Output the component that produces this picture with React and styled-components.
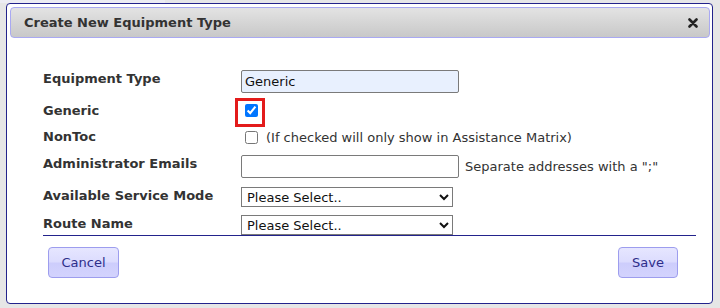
import React from 'react';
import styled, { createGlobalStyle } from 'styled-components';

const GlobalStyle = createGlobalStyle`
  html, body {
    margin: 0;
    padding: 0;
  }
  body {
    background: linear-gradient(to right, #ececf3 165px, #e6e6e9 165px) top left / 100% 3px no-repeat, #e6e6e6;
    font-family: "DejaVu Sans", Verdana, sans-serif;
    font-size: 13px;
    color: #222;
  }
`;

const Page = styled.div`
  padding: 3px 0 0 6px;
`;

const Dialog = styled.div`
  width: 700px;
  height: 296px;
  border: 1px solid #23238c;
  border-radius: 4px;
  background: #fff;
  padding: 3px 2px 0 3px;
  box-sizing: content-box;
  display: flex;
  flex-direction: column;
`;

const Header = styled.div`
  height: 29px;
  border: 1px solid #a9a9f2;
  border-radius: 4px;
  background: linear-gradient(to bottom, #e3e3e3, #c8c8c8);
  display: flex;
  align-items: center;
  justify-content: space-between;
  padding: 0 11px 0 13px;
`;

const Title = styled.span`
  font-weight: bold;
  font-size: 13px;
  color: #333;
`;

const CloseButton = styled.span`
  display: flex;
  align-items: center;
  cursor: pointer;
`;

const Content = styled.div`
  padding: 32px 14px 0 33px;
`;

const Form = styled.div`
  border-bottom: 1px solid #23238c;
`;

const Row = styled.div`
  display: flex;
  align-items: flex-start;
  margin-top: ${p => p.$gap || 0}px;
  height: ${p => p.$h}px;
`;

const Label = styled.div`
  width: 198px;
  flex: none;
  font-weight: bold;
  line-height: 16px;
  color: #333;
  padding-top: ${p => (p.$pt || 0) + 1}px;
`;

const TextInput = styled.input`
  width: 218px;
  height: 23px;
  box-sizing: border-box;
  border: 1px solid #7a7a7a;
  border-radius: 2px;
  background: ${p => (p.$filled ? '#e8f0fe' : '#fff')};
  font-family: "DejaVu Sans", Verdana, sans-serif;
  font-size: 13px;
  padding: 0 3px;
  color: #111;
  margin: 0;
`;

const Hint = styled.span`
  margin-left: 6px;
  line-height: 23px;
  color: #333;
`;

const Highlight = styled.div`
  margin-left: -6px;
  width: 30px;
  height: 29px;
  border: 3px solid #e31b1b;
  display: flex;
  padding: 3px 0 0 7px;
  box-sizing: border-box;
`;

const Check = styled.input.attrs({ type: 'checkbox' })`
  width: 13px;
  height: 13px;
  margin: ${p => p.$m || '0'};
  flex: none;
`;

const Note = styled.span`
  margin-left: 8px;
  margin-top: 2px;
  line-height: 16px;
  color: #333;
`;

const Select = styled.select`
  width: 212px;
  height: 20px;
  box-sizing: border-box;
  border: 1px solid #7a7a7a;
  border-radius: 0;
  font-family: "DejaVu Sans", Verdana, sans-serif;
  font-size: 13px;
  color: #111;
  background: #fff;
  margin: 0;
  padding: 0 0 0 1px;
`;

const Footer = styled.div`
  display: flex;
  justify-content: space-between;
  padding: 11px 18px 0 5px;
`;

const Button = styled.button`
  width: ${p => p.$w}px;
  height: 31px;
  border: 1px solid #9d9dee;
  border-radius: 4px;
  background: linear-gradient(to bottom, #e6e6ff 0%, #dcdcfe 48%, #cdcdfc 52%, #d3d3fd 100%);
  font-family: "DejaVu Sans", Verdana, sans-serif;
  font-size: 13px;
  color: #2d2d8a;
  padding: 0;
  cursor: pointer;
`;

const CloseIcon = () => (
  <svg width="10" height="10" viewBox="0 0 10 10">
    <path d="M1.5 1.5 L8.5 8.5 M8.5 1.5 L1.5 8.5" stroke="#222" strokeWidth="2.6" strokeLinecap="round" />
  </svg>
);

export default function App() {
  return (
    <Page>
      <GlobalStyle />
      <Dialog>
        <Header>
          <Title>Create New Equipment Type</Title>
          <CloseButton><CloseIcon /></CloseButton>
        </Header>
        <Content>
          <Form>
            <Row $h={23}>
              <Label>Equipment Type</Label>
              <TextInput $filled defaultValue="Generic" />
            </Row>
            <Row $gap={5} $h={29}>
              <Label $pt={4}>Generic</Label>
              <Highlight>
                <Check defaultChecked />
              </Highlight>
            </Row>
            <Row $gap={1} $h={19}>
              <Label>NonToc</Label>
              <Check $m="3px 0 0 4px" />
              <Note>(If checked will only show in Assistance Matrix)</Note>
            </Row>
            <Row $gap={8} $h={23}>
              <Label>Administrator Emails</Label>
              <TextInput />
              <Hint>Separate addresses with a ";"</Hint>
            </Row>
            <Row $gap={9} $h={20}>
              <Label>Available Service Mode</Label>
              <Select><option>Please Select..</option></Select>
            </Row>
            <Row $gap={8} $h={20}>
              <Label>Route Name</Label>
              <Select><option>Please Select..</option></Select>
            </Row>
          </Form>
          <Footer>
            <Button $w={71}>Cancel</Button>
            <Button $w={60}>Save</Button>
          </Footer>
        </Content>
      </Dialog>
    </Page>
  );
}
